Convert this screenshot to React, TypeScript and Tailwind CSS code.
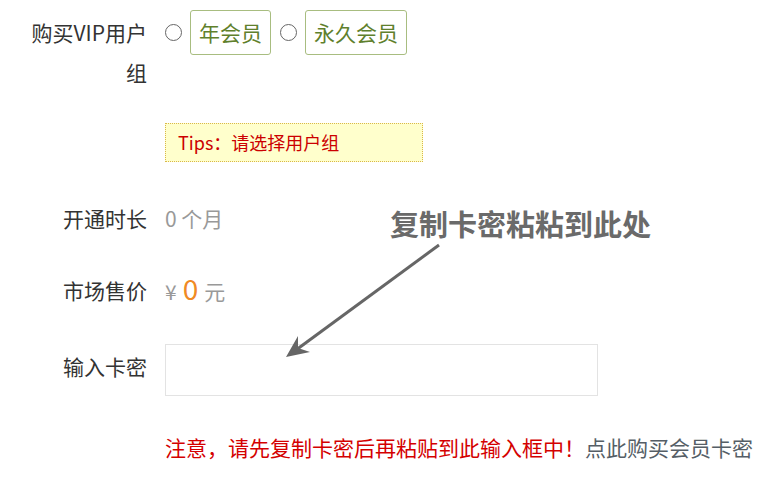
import React, { useState } from "react";

const font = { fontFamily: '"Noto Sans CJK SC", "Noto Sans", sans-serif' };

export default function App() {
  const [group, setGroup] = useState<string>("");
  const [card, setCard] = useState("");

  return (
    <div
      className="relative w-[770px] h-[488px] bg-white overflow-hidden text-[21px] text-[#333]"
      style={font}
    >
      <div className="flex flex-col pl-[27px]">
        {/* 用户组 */}
        <div className="flex items-start gap-[18px] mt-[12px]">
          <label className="w-[120px] text-right leading-[40px]">购买VIP用户组</label>
          <div className="flex items-center gap-[8px] mt-[-2px]">
            <input
              type="radio"
              name="group"
              checked={group === "year"}
              onChange={() => setGroup("year")}
              className="appearance-none w-[17px] h-[17px] rounded-full border border-[#666] bg-white m-0"
            />
            <span className="h-[45px] px-[8px] flex items-center border border-[#a8bd80] rounded-[3px] text-[#5f802c]">
              年会员
            </span>
            <input
              type="radio"
              name="group"
              checked={group === "forever"}
              onChange={() => setGroup("forever")}
              className="appearance-none w-[17px] h-[17px] rounded-full border border-[#666] bg-white m-0 ml-[1px]"
            />
            <span className="h-[45px] px-[8px] flex items-center border border-[#a8bd80] rounded-[3px] text-[#5f802c]">
              永久会员
            </span>
          </div>
        </div>

        {/* 提示 */}
        <div className="flex gap-[18px] mt-[31px]">
          <div className="w-[120px]" />
          <div className="w-[258px] h-[39px] flex items-center pl-[12px] bg-[#ffffcc] border border-dotted border-[#d9b84a] text-[18px] text-[#cc0000]">
            Tips：请选择用户组
          </div>
        </div>

        {/* 开通时长 */}
        <div className="flex items-center gap-[18px] mt-[36px] leading-[40px]">
          <label className="w-[120px] text-right">开通时长</label>
          <span className="text-[#999]">0 个月</span>
        </div>

        {/* 市场售价 */}
        <div className="flex items-center gap-[18px] mt-[30px] leading-[40px]">
          <label className="w-[120px] text-right">市场售价</label>
          <span className="flex items-baseline text-[#999]">
            <span className="text-[21px]">¥</span>
            <span className="text-[28px] text-[#f08a24] mx-[6px]">0</span>
            <span>元</span>
          </span>
        </div>

        {/* 输入卡密 */}
        <div className="flex items-start gap-[18px] mt-[33px]">
          <label className="w-[120px] text-right leading-[40px] mt-[2px]">输入卡密</label>
          <input
            value={card}
            onChange={(e) => setCard(e.target.value)}
            className="w-[433px] h-[52px] border border-[#e3e3e3] outline-none px-2"
          />
        </div>

        {/* 注意 */}
        <div className="flex gap-[18px] mt-[31px] leading-[40px]">
          <div className="w-[120px]" />
          <p className="whitespace-nowrap">
            <span className="text-[#d40000]">注意，请先复制卡密后再粘贴到此输入框中！</span>
            <a className="text-[#555e66] cursor-pointer">点此购买会员卡密</a>
          </p>
        </div>
      </div>

      {/* 标注 */}
      <div className="absolute left-[390px] top-[209px] text-[29px] leading-none font-bold text-[#6a6a6a] whitespace-nowrap">
        复制卡密粘粘到此处
      </div>
      <svg className="absolute left-0 top-0 pointer-events-none" width="770" height="488">
        <line x1="439" y1="245" x2="296" y2="350" stroke="#666" strokeWidth="3" />
        <polygon points="286,357 298,336 298,348 310,352" fill="#666" />
      </svg>
    </div>
  );
}
